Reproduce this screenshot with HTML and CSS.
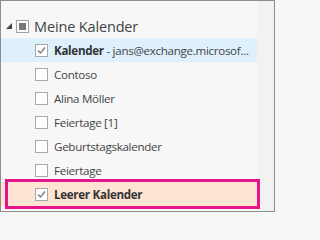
FILE: index.html
```html
<!DOCTYPE html>
<html lang="de">
<head>
<meta charset="utf-8">
<link rel="stylesheet" href="styles.css">
</head>
<body>
<div class="panel">
  <div class="list">
    <div class="row head">
      <svg class="twisty" width="6" height="6" viewBox="0 0 6 6"><polygon points="0,6 6,0 6,6" fill="#444"/></svg>
      <span class="box partial"><span class="fill"></span></span>
      <span class="title">Meine Kalender</span>
    </div>
    <div class="row item selected">
      <span class="box"><svg width="11" height="11" viewBox="0 0 11 11"><polyline points="2,5.5 4.5,8 9,2.5" fill="none" stroke="#7a7a7a" stroke-width="1.2"/></svg></span>
      <span class="label"><b>Kalender</b> - jans@exchange.microsof...</span>
    </div>
    <div class="row item"><span class="box"></span><span class="label">Contoso</span></div>
    <div class="row item"><span class="box"></span><span class="label">Alina Möller</span></div>
    <div class="row item"><span class="box"></span><span class="label">Feiertage [1]</span></div>
    <div class="row item"><span class="box"></span><span class="label">Geburtstagskalender</span></div>
    <div class="row item"><span class="box"></span><span class="label">Feiertage</span></div>
    <div class="row item new">
      <span class="box"><svg width="11" height="11" viewBox="0 0 11 11"><polyline points="2,5.5 4.5,8 9,2.5" fill="none" stroke="#7a7a7a" stroke-width="1.2"/></svg></span>
      <span class="label"><b>Leerer Kalender</b></span>
      <span class="mark"></span>
    </div>
  </div>
  <div class="strip"></div>
</div>
</body>
</html>
```

FILE: styles.css
```css
html, body {
  margin: 0;
  padding: 0;
  background: #f7f7f7;
}
.panel {
  width: 275px;
  height: 212px;
  box-sizing: border-box;
  border: 1px solid #8e8e8e;
  background: #f7f7f7;
  display: flex;
  font-family: "Open Sans", "Noto Sans", sans-serif;
  color: #444;
  overflow: hidden;
}
.list {
  width: 256px;
  padding-top: 13px;
}
.strip {
  flex: 1;
  background: #f2f2f2;
}
.row {
  height: 24px;
  display: flex;
  align-items: center;
  position: relative;
  white-space: nowrap;
}
.head .twisty {
  margin-left: 5px;
  margin-top: -1px;
}
.box {
  width: 11px;
  height: 11px;
  border: 1px solid #a8a8a8;
  background: #fdfdfd;
  display: flex;
  align-items: center;
  justify-content: center;
  flex: none;
}
.head .box {
  margin-left: 4px;
  border-color: #a0a0a0;
}
.fill {
  width: 7px;
  height: 7px;
  background: #777;
}
.title {
  margin-left: 5px;
  font-size: 14.5px;
  letter-spacing: -0.15px;
  color: #444;
}
.item .box {
  margin-left: 34px;
}
.label {
  margin-left: 6px;
  font-size: 11.6px;
  color: #444;
  letter-spacing: -0.3px;
}
.label b {
  color: #333;
}
.selected {
  background: #ddf0fc;
}
.new {
  background: #fde4d3;
}
.mark {
  position: absolute;
  left: 4px;
  top: -3px;
  width: 255px;
  height: 30px;
  box-sizing: border-box;
  border: 3px solid #e4148b;
}
```
